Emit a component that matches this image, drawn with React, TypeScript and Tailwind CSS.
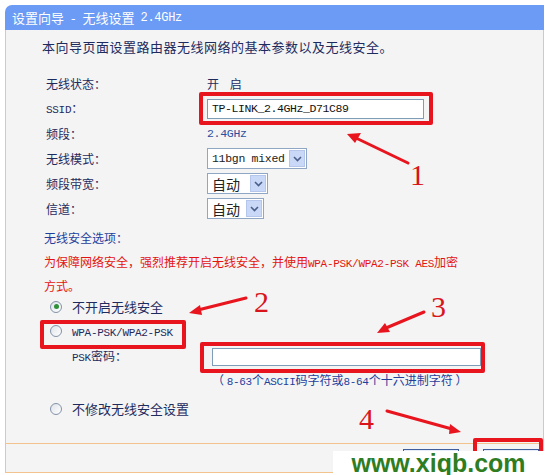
import React from 'react'

const cjk = "font-['Noto_Sans_CJK_SC',sans-serif]"

function A({ children }: { children: React.ReactNode }) {
  return <span className="font-['Liberation_Mono',monospace] text-[11px] tracking-[-0.3px]">{children}</span>
}

function Select({ label, width, big }: { label: string; width: string; big?: boolean }) {
  return (
    <div className={`${width} h-[21px] bg-white border border-[#8fa6c4] flex items-center justify-between pl-[4px] pr-[1px]`}>
      {big ? (
        <span className="text-[14px] text-[#222] leading-none">{label}</span>
      ) : (
        <span className="font-['Liberation_Mono',monospace] text-[11.5px] tracking-[-0.3px] text-[#222] leading-none">{label}</span>
      )}
      <span className="w-[16px] h-[17px] bg-[#c9d8f7] border border-[#b4c6ec] flex items-center justify-center">
        <svg width="9" height="6" viewBox="0 0 9 6">
          <path d="M1 1 L4.5 4.5 L8 1" fill="none" stroke="#4a5f8a" strokeWidth="1.6" />
        </svg>
      </span>
    </div>
  )
}

function Radio({ checked }: { checked?: boolean }) {
  return (
    <span className="w-[12px] h-[12px] rounded-full border border-[#8393a8] bg-gradient-to-br from-[#dfe3e8] to-white flex items-center justify-center">
      {checked && <span className="w-[5px] h-[5px] rounded-full bg-[#2f8f3a]" />}
    </span>
  )
}

export default function App() {
  const rows: { label: React.ReactNode; value: React.ReactNode }[] = [
    { label: '无线状态：', value: <span className="text-[12px] text-[#1e2b5e] tracking-[4px]">开 启</span> },
    {
      label: <><A>SSID</A>：</>,
      value: (
        <div className="w-[217px] h-[20px] bg-white border border-[#7f9db9] flex items-center pl-[4px]">
          <span className="font-['Liberation_Mono',monospace] text-[11.5px] tracking-[-0.4px] text-[#111]">TP-LINK_2.4GHz_D71C89</span>
        </div>
      ),
    },
    { label: '频段：', value: <span className="font-['Liberation_Mono',monospace] text-[11.5px] tracking-[-0.3px] text-[#2d4f9e]">2.4GHz</span> },
    { label: '无线模式：', value: <Select label="11bgn mixed" width="w-[100px]" /> },
    { label: '频段带宽：', value: <Select label="自动" width="w-[61px]" big /> },
    { label: '信道：', value: <Select label="自动" width="w-[57px]" big /> },
  ]

  return (
    <div className={`w-[548px] h-[475px] bg-white relative overflow-hidden ${cjk}`}>
      <div className="pt-[5px] pl-[5px] w-[544px]">
        {/* Title bar */}
        <div className="h-[25px] bg-[#6b9bf4] rounded-tl-[7px] flex items-center pl-[7px] text-white text-[13px]">
          <span>设置向导</span>
          <span className="mx-[7px]">-</span>
          <span>无线设置</span>
          <span className="ml-[6px] font-['Liberation_Mono',monospace] text-[12px] tracking-[-0.3px]">2.4GHz</span>
        </div>

        {/* Body */}
        <div className="h-[413px] bg-[#f4f4f4] border-l border-r border-[#f2c38c] pt-[8px] text-[#1e2b5e]">
          <p className="pl-[36px] h-[18px] leading-[18px] text-[13px] tracking-[0.5px]">
            本向导页面设置路由器无线网络的基本参数以及无线安全。
          </p>

          <div className="mt-[15px] pl-[40px]">
            {rows.map((r, i) => (
              <div key={i} className="grid grid-cols-[161px_1fr] items-center h-[25px] text-[12px]">
                <span>{r.label}</span>
                <div className="flex items-center">{r.value}</div>
              </div>
            ))}
          </div>

          <div className="pl-[38px] mt-[4px]">
            <p className="h-[25px] leading-[25px] text-[12px] text-[#1f3f9c]">无线安全选项：</p>
            <p className="mt-[1px] leading-[21px] text-[12px] text-[#e3140f]">
              为保障网络安全，强烈推荐开启无线安全，并使用<A>WPA-PSK/WPA2-PSK AES</A>加密
              <br />
              方式。
            </p>
          </div>

          <div className="pl-[44px] mt-[-1px] text-[12px]">
            <div className="h-[23px] flex items-center gap-[10px]">
              <Radio checked />
              <span className="text-[13px]">不开启无线安全</span>
            </div>
            <div className="h-[26px] flex items-center gap-[10px]">
              <Radio />
              <span className="pt-[2px] leading-none"><A>WPA-PSK/WPA2-PSK</A></span>
            </div>
            <div className="h-[25px] grid grid-cols-[162px_1fr] items-center">
              <span className="pl-[22px]"><A>PSK</A>密码：</span>
              <div className="w-[269px] h-[18px] bg-white border border-[#7f9db9]" />
            </div>
            <p className="h-[22px] leading-[22px] pl-[162px] text-[12px] text-[#1f3f9c]">
              （ <A>8-63</A>个<A>ASCII</A>码字符或<A>8-64</A>个十六进制字符 ）
            </p>
            <div className="mt-[5px] h-[25px] flex items-center gap-[10px]">
              <Radio />
              <span className="text-[13px]">不修改无线安全设置</span>
            </div>
          </div>
        </div>

        {/* Footer */}
        <div className="h-[30px] bg-[#f4f4f4] border border-[#f2c38c] flex items-start justify-end gap-[24px] pt-[5px] pr-[4px]">
          <button className="w-[56px] h-[22px] bg-[#e6ecf8] border border-[#3f5e9c] text-[12px] text-[#1e2b5e]">上一步</button>
          <button className="w-[56px] h-[22px] bg-[#e6ecf8] border border-[#3f5e9c] text-[12px] text-[#1e2b5e]">下一步</button>
        </div>
      </div>

      {/* Annotation boxes */}
      <div className="absolute left-[199px] top-[92px] w-[234px] h-[33px] border-[4px] border-[#e8141e] rounded-[2px]" />
      <div className="absolute left-[40px] top-[320px] w-[146px] h-[29px] border-[4px] border-[#e8141e] rounded-[2px]" />
      <div className="absolute left-[200px] top-[342px] w-[285px] h-[31px] border-[4px] border-[#e8141e] rounded-[2px]" />
      <div className="absolute left-[473px] top-[438px] w-[70px] h-[40px] border-[4px] border-[#e8141e] rounded-[2px]" />

      {/* Arrows */}
      <svg className="absolute left-0 top-0" width="548" height="475" viewBox="0 0 548 475">
        <g stroke="#e8141e" strokeWidth="3" strokeLinecap="round" fill="#e8141e">
          <line x1="408" y1="163" x2="356" y2="138" />
          <line x1="246" y1="298" x2="198" y2="310" />
          <line x1="424" y1="312" x2="386" y2="328" />
          <line x1="387" y1="411" x2="452" y2="429" />
        </g>
        <g fill="#e8141e">
          <polygon points="347,134 361,133 355,143" />
          <polygon points="189,313 200,305 202,315" />
          <polygon points="377,333 385,323 390,332" />
          <polygon points="461,432 450,424 449,434" />
        </g>
      </svg>

      {/* Step numbers */}
      <span className="absolute left-[410px] top-[160px] font-['Liberation_Serif',serif] text-[30px] leading-none text-[#d9141b]">1</span>
      <span className="absolute left-[254px] top-[287px] font-['Liberation_Serif',serif] text-[30px] leading-none text-[#d9141b]">2</span>
      <span className="absolute left-[431px] top-[292px] font-['Liberation_Serif',serif] text-[30px] leading-none text-[#d9141b]">3</span>
      <span className="absolute left-[359px] top-[404px] font-['Liberation_Serif',serif] text-[30px] leading-none text-[#d9141b]">4</span>

      {/* Watermark */}
      <div className="absolute left-[333px] top-[451px] w-[211px] h-[24px] bg-white flex items-center justify-center">
        <span className="font-['Liberation_Sans',sans-serif] font-bold text-[25px] leading-none text-[#2f7d1f]">www.xiqb.com</span>
      </div>
    </div>
  )
}
